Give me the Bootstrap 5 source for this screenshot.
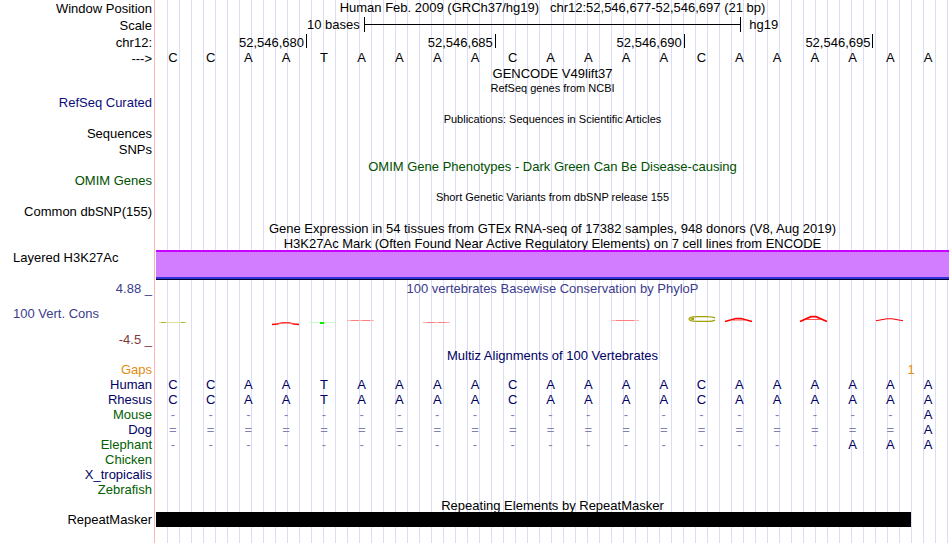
<!DOCTYPE html>
<html lang="en">
<head>
  <meta charset="UTF-8" />
  <meta name="viewport" content="width=device-width, initial-scale=1.0"/>
  <title>Genome Browser - chr12:52,546,677-52,546,697</title>
  <link rel="stylesheet" href="https://cdn.jsdelivr.net/npm/bootstrap@5.3.3/dist/css/bootstrap.min.css"/>
  <style>
    body {
      font-family: "Liberation Sans", Arial, sans-serif;
      font-size: 13px;
      line-height: 15px;
      color: #000;
    }
    /* pink divider, white label side, guide lines every 12px */
    .browser {
      background:
        linear-gradient(#ffb4b4, #ffb4b4) 154px 0 / 1px 100% no-repeat,
        linear-gradient(#fff, #fff) 0 0 / 160px 100% no-repeat,
        linear-gradient(to right, #dcdcf8 1px, transparent 1px) 11px 0 / 12px 100%;
    }
    .track { display: flex; height: 15px; }
    .h14 { height: 14px; }
    .h16 { height: 16px; }
    .h17 { height: 17px; }
    .side {
      width: 156px;
      flex: none;
      padding-right: 4px;
      text-align: right;
      white-space: nowrap;
    }
    .side-left { padding-left: 13px; text-align: left; }
    .tight { line-height: 13px; }
    .loose { line-height: 17px; }
    .plot {
      flex: 1;
      min-width: 0;
      margin-right: 1px;
      white-space: nowrap;
    }
    .title { text-align: center; }
    .fine { font-size: 11px; }
    .navy { color: #000064; }
    .refseq { color: #0c0c78; }
    .green { color: #005000; }
    .species { color: #006000; }
    .orange { color: #e68a10; }
    .phylo { color: #3c3c8c; }
    .phylo-min { color: #823c3c; }

    .bases { display: grid; grid-template-columns: repeat(21, 1fr); }
    .bases span { text-align: center; padding-right: 4px; }
    .bases .miss { color: #8080b4; }

    .ruler { display: grid; grid-template-columns: 11fr 20fr 11fr; }
    .ruler-bar {
      height: 15px;
      border: solid #000;
      border-width: 0 1px;
      background: linear-gradient(#000, #000) 0 7px / 100% 1px no-repeat;
    }
    .ticks { display: grid; grid-template-columns: 4fr 5fr 5fr 5fr 2fr; }
    .ticks span {
      height: 14px;
      line-height: 17px;
      padding-right: 2px;
      text-align: right;
      border-right: 1px solid #000;
    }
    .h3k { height: 30px; }
    .h3k .plot {
      background: #d27dff;
      border-top: 2px solid #c800ff;
      border-bottom: 1px solid #000028;
      box-shadow: inset 0 -2px #3232dc;
    }
    .wiggle { height: 50px; }
    .wiggle .side { padding-top: 9px; }
    .wiggle svg { display: block; width: 100%; height: 50px; }
    .gap-row { display: grid; grid-template-columns: 39fr 2fr 1fr; }
    .repeat-bar { display: grid; grid-template-columns: 20fr 1fr; }
  </style>
</head>
<body>

<main class="browser min-vh-100">
  <div class="track h17">
    <div class="side loose">Window Position</div>
    <div class="plot title">Human Feb. 2009 (GRCh37/hg19) &nbsp; chr12:52,546,677-52,546,697 (21 bp)</div>
  </div>
  <div class="track h17">
    <div class="side loose">Scale</div>
    <div class="plot ruler">
      <span class="text-end pe-1">10 bases</span>
      <span class="ruler-bar"></span>
      <span class="ps-2">hg19</span>
    </div>
  </div>
  <div class="track h16">
    <div class="side loose">chr12:</div>
    <div class="plot ticks"><span>52,546,680</span><span>52,546,685</span><span>52,546,690</span><span>52,546,695</span></div>
  </div>
  <div class="track h16">
    <div class="side loose">---&gt;</div>
    <div class="plot bases" data-seq="CCAATAAAACAAAACAAAAAA"></div>
  </div>
  <div class="track"><div class="side"></div><div class="plot title">GENCODE V49lift37</div></div>
  <div class="track"><div class="side"></div><div class="plot title fine">RefSeq genes from NCBI</div></div>
  <div class="track"><div class="side tight refseq">RefSeq Curated</div></div>
  <div class="track h16"><div class="side"></div><div class="plot title fine loose">Publications: Sequences in Scientific Articles</div></div>
  <div class="track"><div class="side tight">Sequences</div></div>
  <div class="track h17"><div class="side">SNPs</div></div>
  <div class="track"><div class="side"></div><div class="plot title green">OMIM Gene Phenotypes - Dark Green Can Be Disease-causing</div></div>
  <div class="track h16"><div class="side tight green">OMIM Genes</div></div>
  <div class="track"><div class="side"></div><div class="plot title fine">Short Genetic Variants from dbSNP release 155</div></div>
  <div class="track h16"><div class="side tight">Common dbSNP(155)</div></div>
  <div class="track"><div class="side"></div><div class="plot title">Gene Expression in 54 tissues from GTEx RNA-seq of 17382 samples, 948 donors (V8, Aug 2019)</div></div>
  <div class="track h14"><div class="side"></div><div class="plot title">H3K27Ac Mark (Often Found Near Active Regulatory Elements) on 7 cell lines from ENCODE</div></div>
  <div class="track h3k"><div class="side side-left">Layered H3K27Ac</div><div class="plot"></div></div>
  <div class="track h17">
    <div class="side loose phylo">4.88 _</div>
    <div class="plot title loose phylo">100 vertebrates Basewise Conservation by PhyloP</div>
  </div>
  <div class="track wiggle">
    <div class="side side-left d-flex flex-column justify-content-between">
      <span class="phylo">100 Vert. Cons</span>
      <span class="phylo-min text-end">-4.5 _</span>
    </div>
    <div class="plot">
      <svg viewBox="0 0 793 50" preserveAspectRatio="none" fill="none" stroke="#f00" aria-hidden="true">
        <path d="M3 25.500H30" stroke="#dce096"/>
        <path d="M5 25.500H10M25 25.500H29" stroke="#b4b428"/>
        <path d="M116 27.500L121 27L126 25.800H133L138 27L143 27.500" stroke-width="1.300"/>
        <path d="M122 26.500H137" stroke="#ff9090" stroke-width=".6"/>
        <path d="M153 25.500H179" stroke="#c8ffc8"/>
        <path d="M164 26H168" stroke="#00f000" stroke-width="2"/>
        <path d="M191 23.500H218M267 25.500H294M455 23.500H483" stroke="#ffb4b4"/>
        <path d="M195 23.500H203M206 23.500H214M271 25.500H279M282 25.500H290M460 23.500H478" stroke="#ff8080"/>
        <path d="M559 21Q557 19.600 550 19.600H541Q533 19.600 533 22Q533 24.400 541 24.400H550Q557 24.400 559 23" stroke="#a0a000" stroke-width="1.200"/>
        <path d="M533 22L538 20.500V23.500Z" fill="#a0a000" stroke="none"/>
        <path d="M569 24.500L580 21.600H585L596 24.500" stroke-width="1.600"/>
        <path d="M575 23.500H590" stroke="#ff9090" stroke-width=".8"/>
        <path d="M644 24.500L655 19.700H660L671 24.500" stroke-width="1.800"/>
        <path d="M650 22.500H665" stroke="#ff5050"/>
        <path d="M720 23.700L731 21.700H736L747 23.700" stroke-width="1.100"/>
      </svg>
    </div>
  </div>
  <div class="track"><div class="side"></div><div class="plot title loose navy">Multiz Alignments of 100 Vertebrates</div></div>
  <div class="track orange">
    <div class="side">Gaps</div>
    <div class="plot gap-row"><span></span><span class="text-center">1</span></div>
  </div>
  <div class="track navy"><div class="side">Human</div><div class="plot bases" data-seq="CCAATAAAACAAAACAAAAAA"></div></div>
  <div class="track navy"><div class="side">Rhesus</div><div class="plot bases" data-seq="CCAATAAAACAAAACAAAAAA"></div></div>
  <div class="track navy"><div class="side species">Mouse</div><div class="plot bases" data-seq="--------------------A"></div></div>
  <div class="track navy"><div class="side">Dog</div><div class="plot bases" data-seq="====================A"></div></div>
  <div class="track navy"><div class="side species">Elephant</div><div class="plot bases" data-seq="------------------AAA"></div></div>
  <div class="track"><div class="side species">Chicken</div></div>
  <div class="track"><div class="side navy">X_tropicalis</div></div>
  <div class="track"><div class="side species">Zebrafish</div></div>
  <div class="track"><div class="side"></div><div class="plot title loose">Repeating Elements by RepeatMasker</div></div>
  <div class="track">
    <div class="side">RepeatMasker</div>
    <div class="plot repeat-bar"><span class="bg-black"></span></div>
  </div>
</main>

<script src="https://cdn.jsdelivr.net/npm/bootstrap@5.3.3/dist/js/bootstrap.bundle.min.js"></script>
<script>
  // One cell per base; gaps in the alignment are drawn lighter
  document.querySelectorAll("[data-seq]").forEach(row => {
    for (const base of row.dataset.seq) {
      const cell = document.createElement("span");
      cell.textContent = base;
      if (base === "-" || base === "=") cell.className = "miss";
      row.appendChild(cell);
    }
  });
</script>
</body>
</html>
